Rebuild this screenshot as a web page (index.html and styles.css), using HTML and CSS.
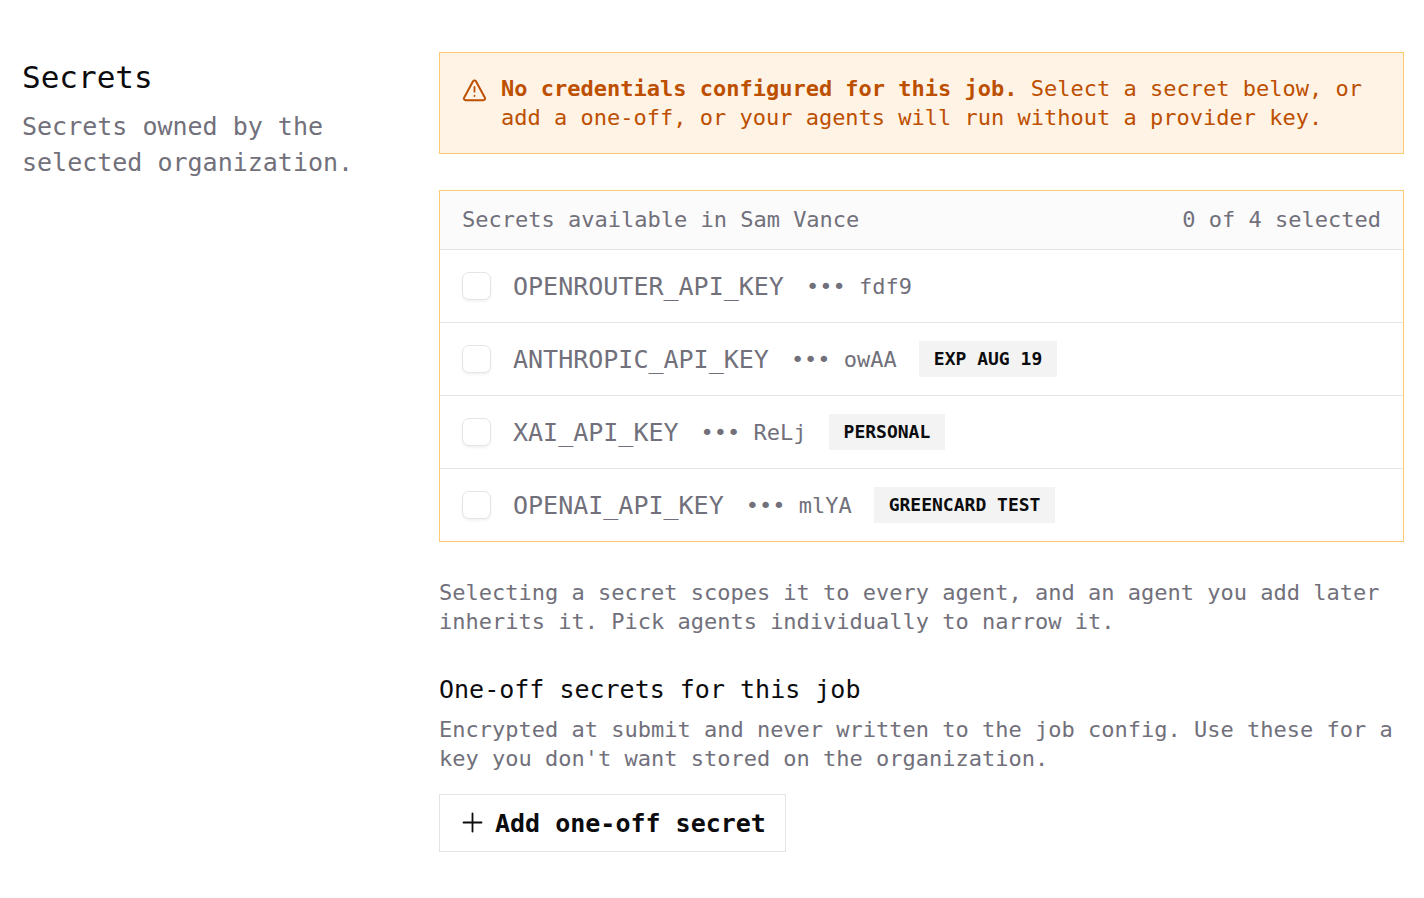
FILE: index.html
```html
<!DOCTYPE html>
<html lang="en">
<head>
    <meta charset="UTF-8">
    <meta name="viewport" content="width=device-width, initial-scale=1.0">
    <title>Secrets</title>
    <link rel="stylesheet" href="styles.css">
</head>
<body>
    <main class="section">
        <header class="section-intro">
            <h1>Secrets</h1>
            <p>Secrets owned by the selected organization.</p>
        </header>

        <div class="section-content">
            <div class="alert" role="alert">
                <svg class="alert-icon" viewBox="0 0 24 24" fill="none" stroke="currentColor" stroke-width="1.9" stroke-linecap="round" stroke-linejoin="round" aria-hidden="true">
                    <path d="M10.6 3.1 2 18.9a1.6 1.6 0 0 0 1.4 2.4h17.2a1.6 1.6 0 0 0 1.4-2.4L13.4 3.1a1.6 1.6 0 0 0-2.8 0Z"/>
                    <path d="M12 8.5v4.6M12 17v.3" stroke-width="1.7"/>
                </svg>
                <p><strong>No credentials configured for this job.</strong> Select a secret below, or add a one-off, or your agents will run without a provider key.</p>
            </div>

            <section class="secrets">
                <div class="secrets-header">
                    <span>Secrets available in Sam Vance</span>
                    <span>0 of 4 selected</span>
                </div>
                <ul class="secrets-list">
                    <li>
                        <label class="secret">
                            <input type="checkbox" name="secret" value="openrouter">
                            <span class="secret-name">OPENROUTER_API_KEY</span>
                            <span class="secret-hint">••• fdf9</span>
                        </label>
                    </li>
                    <li>
                        <label class="secret">
                            <input type="checkbox" name="secret" value="anthropic">
                            <span class="secret-name">ANTHROPIC_API_KEY</span>
                            <span class="secret-hint">••• owAA</span>
                            <span class="badge">EXP AUG 19</span>
                        </label>
                    </li>
                    <li>
                        <label class="secret">
                            <input type="checkbox" name="secret" value="xai">
                            <span class="secret-name">XAI_API_KEY</span>
                            <span class="secret-hint">••• ReLj</span>
                            <span class="badge">PERSONAL</span>
                        </label>
                    </li>
                    <li>
                        <label class="secret">
                            <input type="checkbox" name="secret" value="openai">
                            <span class="secret-name">OPENAI_API_KEY</span>
                            <span class="secret-hint">••• mlYA</span>
                            <span class="badge">GREENCARD TEST</span>
                        </label>
                    </li>
                </ul>
            </section>

            <p class="help">Selecting a secret scopes it to every agent, and an agent you add later inherits it. Pick agents individually to narrow it.</p>

            <section class="one-off">
                <h2>One-off secrets for this job</h2>
                <p class="help">Encrypted at submit and never written to the job config. Use these for a key you don't want stored on the organization.</p>
                <button type="button" class="add-button">
                    <svg class="add-icon" viewBox="0 0 22 22" fill="none" stroke="currentColor" stroke-width="1.8" stroke-linecap="round" aria-hidden="true">
                        <path d="M10.5 1.5v18M1.5 10.5h18"/>
                    </svg>
                    Add one-off secret
                </button>
            </section>
        </div>
    </main>
</body>
</html>
```
FILE: styles.css
```css
* {
    box-sizing: border-box;
}

body {
    margin: 0;
    background-color: #fff;
    color: #0c0c0f;
    font-family: "DejaVu Sans Mono", "Liberation Mono", monospace;
    font-size: 22px;
    line-height: 29px;
}

h1, h2, p, ul {
    margin: 0;
    padding: 0;
    font-weight: normal;
}

.section {
    display: grid;
    grid-template-columns: 381px minmax(0, 1fr);
    gap: 36px;
    padding: 52px 20px 46px 22px;
}

.section-intro h1 {
    font-size: 31px;
    line-height: 50px;
    margin-bottom: 7px;
}

.section-intro p {
    max-width: 360px;
    color: #71707b;
    font-size: 25px;
    line-height: 36px;
}

.section-content {
    display: flex;
    flex-direction: column;
    gap: 36px;
}

.alert {
    display: flex;
    gap: 14px;
    padding: 21px 22px;
    border: 1px solid #ffca73;
    background-color: #fff3e6;
    color: #bd4f00;
}

.alert-icon {
    flex: none;
    width: 25px;
    height: 25px;
    margin-top: 4px;
}

/* Secrets table */
.secrets {
    border: 1px solid #ffca73;
}

.secrets-header {
    display: flex;
    justify-content: space-between;
    padding: 14px 22px 15px;
    border-bottom: 1px solid #e4e4e4;
    background-color: #fbfbfb;
    color: #71707b;
}

.secrets-list {
    list-style: none;
}

.secrets-list li + li {
    border-top: 1px solid #e4e4e4;
}

.secret {
    display: flex;
    align-items: center;
    gap: 22px;
    height: 72px;
    padding: 0 22px;
    color: #71707b;
    cursor: pointer;
}

.secret input {
    appearance: none;
    flex: none;
    width: 29px;
    height: 28px;
    margin: 0;
    border: 1px solid #e4e4e4;
    border-radius: 7px;
    background-color: #fff;
    box-shadow: 0 2px 3px rgba(0, 0, 0, 0.05);
}

.secret input:checked {
    background-color: #0c0c0f;
}

.secret-name {
    font-size: 25px;
}

.badge {
    padding: 0 15px;
    background-color: #f3f3f3;
    color: #0c0c0f;
    font-size: 18px;
    font-weight: bold;
    line-height: 36px;
}

.help {
    color: #71707b;
}

.one-off h2 {
    font-size: 25px;
    line-height: 36px;
    margin-bottom: 7px;
}

.add-button {
    display: flex;
    align-items: center;
    gap: 11px;
    height: 58px;
    margin-top: 21px;
    padding: 0 19px 0 22px;
    border: 1px solid #e4e4e4;
    background-color: #fff;
    color: #0c0c0f;
    font: bold 25px "DejaVu Sans Mono", "Liberation Mono", monospace;
    cursor: pointer;
}

.add-icon {
    width: 22px;
    height: 22px;
}
```
